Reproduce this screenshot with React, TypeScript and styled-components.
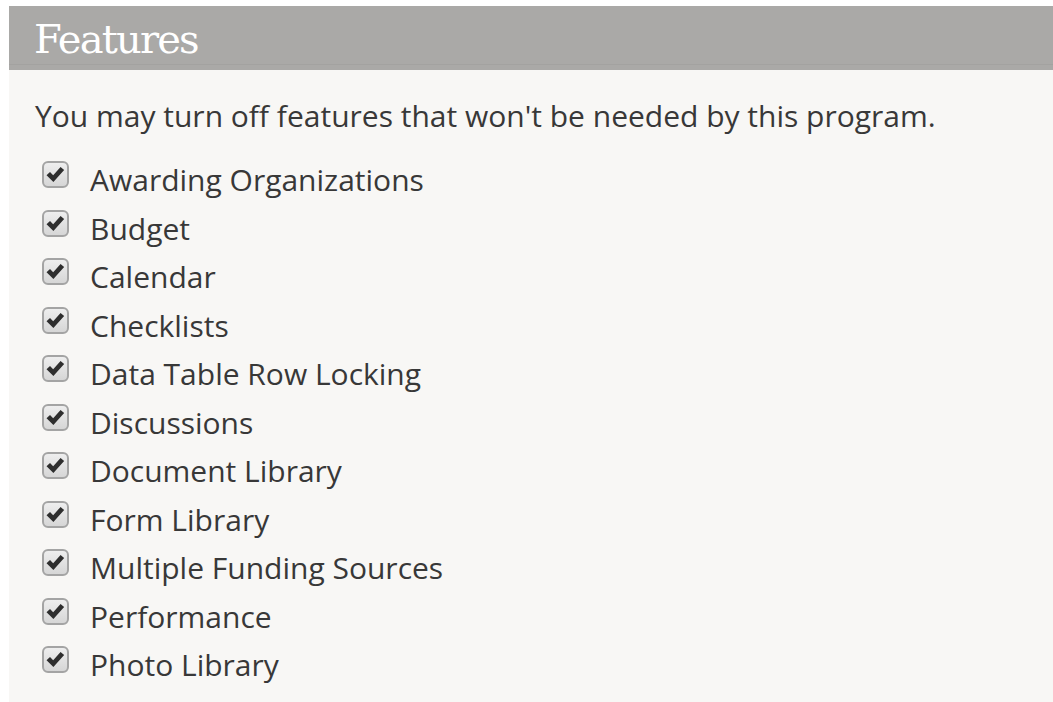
import styled, { createGlobalStyle } from 'styled-components';

const features = [
  'Awarding Organizations',
  'Budget',
  'Calendar',
  'Checklists',
  'Data Table Row Locking',
  'Discussions',
  'Document Library',
  'Form Library',
  'Multiple Funding Sources',
  'Performance',
  'Photo Library',
];

const CheckMark = () => (
  <svg width="19" height="17" viewBox="0 0 18 16">
    <path d="M0.5 8.6 L3.8 5.6 L6.8 8.8 L13.8 0.8 L17.2 3.8 L7 15 Z" fill="#2e2e2e" />
  </svg>
);

const App = () => (
  <>
    <GlobalStyle />
    <Panel>
      <Header>
        <Title>Features</Title>
      </Header>
      <Body>
        <Intro>You may turn off features that won't be needed by this program.</Intro>
        <List>
          {features.map((name) => (
            <Row key={name}>
              <Box>
                <CheckMark />
              </Box>
              <Label>{name}</Label>
            </Row>
          ))}
        </List>
      </Body>
    </Panel>
  </>
);

export default App;

const GlobalStyle = createGlobalStyle`
  body {
    margin: 0;
    background: #ffffff;
    font-family: "Open Sans", "Liberation Sans", sans-serif;
  }
`;

const Panel = styled.section`
  margin: 6px 0 0 9px;
  background: #f8f7f5;
`;

const Header = styled.header`
  height: 64px;
  background: #aaa9a7;
  box-shadow: inset 0 -5px 0 #aaa9a7, inset 0 -6px 0 #a3a2a0;
  padding-left: 25px;
  display: flex;
  align-items: center;
`;

const Title = styled.h2`
  margin: 2px 0 0 0;
  font-family: "DejaVu Serif", "Liberation Serif", serif;
  font-weight: normal;
  font-size: 40px;
  letter-spacing: -1.8px;
  color: #ffffff;
`;

const Body = styled.div`
  padding: 27px 0 20px 26px;
  color: #383838;
  font-size: 30px;
`;

const Intro = styled.p`
  margin: 0 0 22px 0;
  line-height: 37px;
`;

const List = styled.div`
  display: flex;
  flex-direction: column;
`;

const Row = styled.label`
  display: flex;
  align-items: flex-start;
  height: 48.5px;
  line-height: 48.5px;
`;

const Box = styled.span`
  box-sizing: border-box;
  width: 27px;
  height: 27px;
  margin: 5px 0 0 7px;
  border: 2px solid #a4a4a4;
  border-radius: 6px;
  background: linear-gradient(#eeeeee, #d6d6d6);
  display: flex;
  align-items: center;
  justify-content: center;
`;

const Label = styled.span`
  margin-left: 21px;
`;
